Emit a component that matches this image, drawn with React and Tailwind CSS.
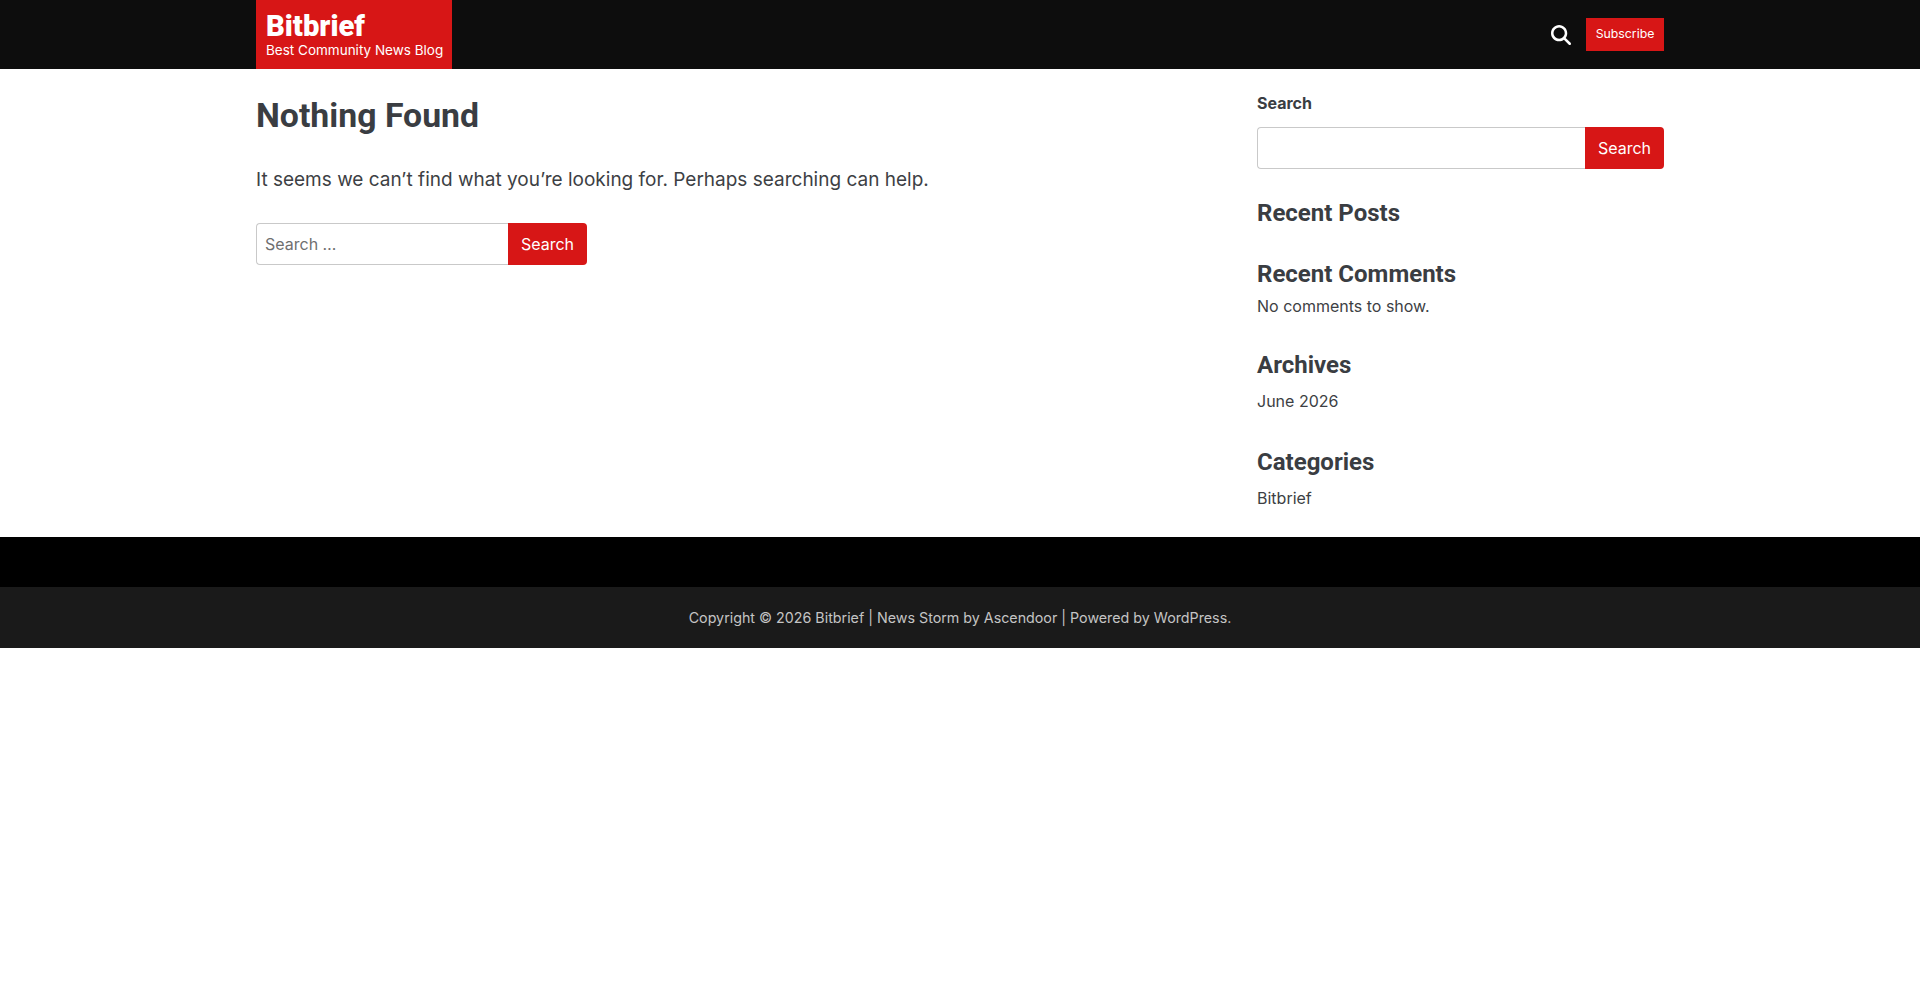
import React from 'react';
import { FaMagnifyingGlass } from 'react-icons/fa6';

const SearchForm = ({ placeholder, inputWidth }) => (
  <form className="flex" onSubmit={(e) => e.preventDefault()}>
    <input
      type="text"
      placeholder={placeholder}
      className={`h-[42px] ${inputWidth} rounded-l-[4px] border border-r-0 border-[#c9c9c9] bg-white px-2 text-[16px] text-[#3a3d42] placeholder:text-[#6f6f6f] outline-none`}
    />
    <button type="submit" className="h-[42px] w-[79px] rounded-r-[4px] bg-[#d71616] text-[16px] text-white">
      Search
    </button>
  </form>
);

const WidgetTitle = ({ children, className }) => (
  <h2 className={`text-[24px] leading-[30px] font-bold text-[#3a3d42] font-['Roboto',sans-serif] ${className}`}>{children}</h2>
);

const App = () => {
  return (
    <div className="min-h-[993px] bg-white font-['Inter',sans-serif] text-[#3d3f44]">
      <header className="h-[69px] bg-[#0d0d0d]">
        <div className="mx-auto flex h-full w-[1408px] items-center justify-between">
          <a href="#" className="flex h-full w-[196px] flex-col bg-[#d71616] px-[10px] pt-[11px] text-white">
            <span className="text-[29.2px] leading-[30px] font-black font-['Roboto',sans-serif]">Bitbrief</span>
            <span className="mt-[1px] text-[13.5px] leading-[17px] whitespace-nowrap font-['Inter',sans-serif]">Best Community News Blog</span>
          </a>
          <div className="flex items-center gap-[15px]">
            <FaMagnifyingGlass className="h-[20px] w-[20px] text-white" />
            <a href="#" className="flex h-[33px] w-[78px] items-center justify-center bg-[#d71616] text-[12.3px] text-white">
              Subscribe
            </a>
          </div>
        </div>
      </header>

      <main className="mx-auto flex h-[468px] w-[1408px] justify-between">
        <section className="pt-[26px]">
          <h1 className="text-[33.8px] leading-[42px] font-bold text-[#3a3d42] font-['Roboto',sans-serif]">Nothing Found</h1>
          <p className="mt-[28px] text-[19px] leading-[30px]">
            It seems we can’t find what you’re looking for. Perhaps searching can help.
          </p>
          <div className="mt-[28px]">
            <SearchForm placeholder="Search …" inputWidth="w-[252px]" />
          </div>
        </section>

        <aside className="w-[407px] pt-[23px]">
          <h2 className="text-[16px] leading-[22px] font-bold text-[#3a3d42]">Search</h2>
          <div className="mt-[13px]">
            <SearchForm placeholder="" inputWidth="w-[328px]" />
          </div>
          <WidgetTitle className="mt-[29px]">Recent Posts</WidgetTitle>
          <WidgetTitle className="mt-[31px]">Recent Comments</WidgetTitle>
          <p className="mt-[3px] text-[16px] leading-[28px]">No comments to show.</p>
          <WidgetTitle className="mt-[30px]">Archives</WidgetTitle>
          <p className="mt-[7px] text-[16px] leading-[28px]">June 2026</p>
          <WidgetTitle className="mt-[32px]">Categories</WidgetTitle>
          <p className="mt-[7px] text-[16px] leading-[28px]">Bitbrief</p>
        </aside>
      </main>

      <div className="h-[50px] bg-black" />
      <footer className="flex h-[61px] items-center justify-center bg-[#1a1a1a] text-[14.27px] text-[#c4c4c4]">
        Copyright © 2026 Bitbrief | News Storm by Ascendoor | Powered by WordPress.
      </footer>
    </div>
  );
};

export default App;
